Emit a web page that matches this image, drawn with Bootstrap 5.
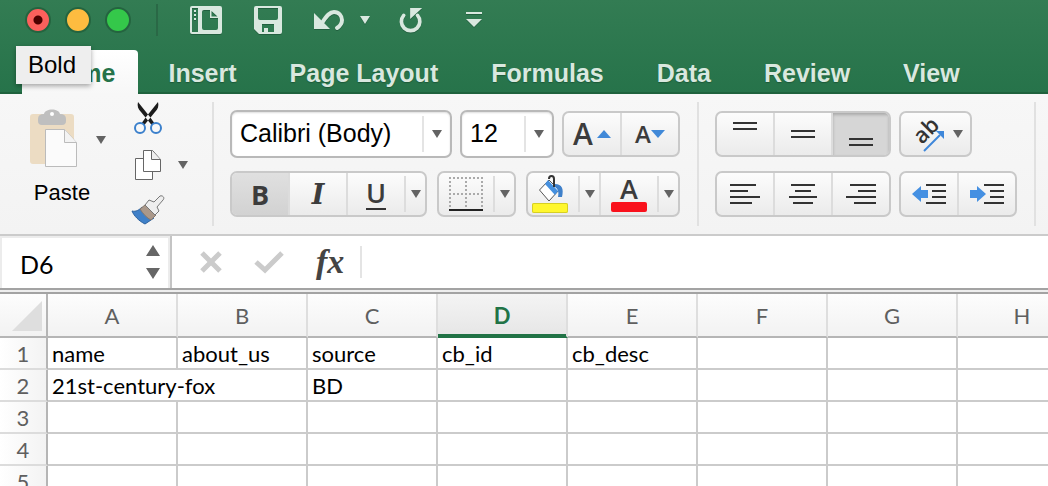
<!DOCTYPE html>
<html lang="en">
<head>
<meta charset="utf-8">
<meta name="viewport" content="width=device-width, initial-scale=1">
<title>Workbook</title>
<link rel="stylesheet" href="https://cdn.jsdelivr.net/npm/bootstrap@5.3.0/dist/css/bootstrap.min.css">
<style>
  :root { --ui: "Liberation Sans", Arial, sans-serif; --cell: Lato, sans-serif; --glyph: "Open Sans", "Noto Sans", sans-serif; }
  body { font-family: var(--ui); background: #fff; }
  svg { display: block; flex: none; overflow: visible; }

  /* title bar and tabs */
  .app-head { background: linear-gradient(#337c53, #26734a); }
  .title-row { height: 40px; padding-left: 25px; }
  .lights { gap: 14px; }
  .light { width: 26px; height: 26px; border-radius: 50%; border: 2px solid #24643f; padding: 0; flex: none; }
  .light-r { background: radial-gradient(circle, #4d0000 4px, #fc605c 5px); }
  .light-y { background: #fdbc40; }
  .light-g { background: #34c84a; }
  .title-rule { width: 2px; height: 32px; background: #2a6846; margin: 0 32px 0 25px; }
  .quick { background: none; border: 0; padding: 0; color: #d9e8df; filter: drop-shadow(0 1px 0 #22603f); }
  .tab-row { margin-top: 10px; padding-left: 22px; gap: 1px; box-shadow: inset 0 -2px #1f623d; }
  .tab-row .nav-link { font-size: 25px; line-height: 46px; height: 44px; font-weight: 700; color: #d9e8df; padding: 0 26px; white-space: nowrap; text-shadow: 0 1px 1px #1d5a39; }
  .tab-row .nav-link.active { color: #26734a; background: linear-gradient(#fff, #f7f7f7); padding: 0 23px 0 24px; margin-right: 3px; border-radius: 4px 4px 0 0; text-shadow: none; }
  .tip { left: 16px; top: 46px; padding: 0 15px 0 12px; line-height: 38px; font-size: 24px; color: #000; background: #eee; box-shadow: 0 2px 5px rgba(0,0,0,.35); z-index: 5; }

  /* ribbon */
  .ribbon { background: linear-gradient(#f7f7f7, #f3f3f3); border-bottom: 2px solid #cbcbcb; height: 142px; padding-left: 22px; }
  .clip-group { width: 190px; }
  .paste-col { width: 80px; }
  .paste-drop { margin-left: -6px; }
  .group-rule { width: 2px; height: 124px; margin-top: 8px; background: #e1e1e1; flex: none; }
  .group { padding: 16px 17px 0 16px; row-gap: 13px; flex: none; }
  .plain { background: none; border: 0; padding: 0; }
  .paste-label { font-size: 22px; line-height: 26px; color: #000; }
  .combo { height: 48px; border: 2px solid #b9b9b9; border-radius: 7px; font-size: 25px; line-height: 28px; color: #000; padding: 0 0 2px 8px; box-shadow: inset 0 1px 2px #ddd;
    background: url("data:image/svg+xml,%3Csvg xmlns='http://www.w3.org/2000/svg' width='28' height='36'%3E%3Cpath d='M0 0h2v36h-2z' fill='%23e4e4e4'/%3E%3Cpath d='M10 14h10l-5 8z' fill='%23636363'/%3E%3C/svg%3E") no-repeat right 0 center #fff; }
  .combo-font { width: 222px; }
  .combo-size { width: 94px; }
  .bar { height: 46px; border: 2px solid #c9c9c9; border-radius: 7px; background: linear-gradient(#fcfcfc, #ebebeb); overflow: hidden; }
  .bar > button { background: none; border: 0; border-left: 2px solid #dcdcdc; padding: 0; width: 58px; display: flex; align-items: center; justify-content: center; font-family: var(--glyph); color: #3c3c3c; line-height: 1; }
  .bar > button:first-child { border-left: 0; width: 56px; }
  .bar > button.drop { width: 21px; color: #636363; border-image: linear-gradient(transparent 10%, #ddd 10% 90%, transparent 90%) 1; }
  .bar > button.on { background: linear-gradient(#e0e0e0, #d2d2d2); }
  .bar > button.pressed { background: #d6d6d6; box-shadow: inset 0 2px 3px #aaa; }
  .bar > button.b-border { width: 54px; }
  .bar > button.b-fill { width: 50px; padding-right: 6px; }
  .bar > button.b-color { width: 58px; }
  .bar > button.b-orient { width: 69px; }
  .g-b { font-size: 27px; font-weight: 700; }
  .g-i { font: italic 700 27px "DejaVu Serif", serif; }
  .g-u { font-size: 27px; font-weight: 600; line-height: 27px; border-bottom: 2px solid #333; width: 20px; height: 31px; }
  .g-a { font-size: 27px; font-weight: 600; line-height: 26px; }
  .g-big { font-size: 30px; font-weight: 600; }
  .g-small { font-size: 24px; font-weight: 600; }
  .swatch { width: 36px; height: 10px; border-radius: 2px; }
  .swatch-y { background: #fff72e; box-shadow: inset 0 0 0 1px #d6cf24; }
  .swatch-r { background: #f9111c; }

  /* formula bar */
  .formula { height: 52px; }
  .name-box { width: 172px; border-right: 2px solid #c4c4c4; box-shadow: inset 2px 2px #ececec, inset -2px 0 #ececec; padding: 0 10px 0 20px; }
  .name-box input { font: 25px/30px var(--cell); color: #000; border: 0; outline: 0; background: none; width: 100px; padding: 4px 0 0; }
  .fx { font: italic 700 34px/40px "Liberation Serif", serif; color: #444; }
  .entry { border: 0; border-left: 2px solid #e4e4e4; height: 32px; outline: 0; }
  .splitter { height: 6px; background: #eee; border: solid #a3a3a3; border-width: 2px 0; }

  /* sheet */
  .sheet { table-layout: fixed; width: 1088px; border-collapse: separate; border-spacing: 0; font: 22px/28px var(--cell); color: #000; }
  .sheet th { font-weight: 400; color: #5f5f5f; text-align: center; padding: 2px 0 0; }
  .sheet thead th { height: 44px; background: linear-gradient(#fdfdfd, #f2f2f2); border-bottom: 2px solid #b5b5b5; border-right: 2px solid #dedede; }
  .sheet thead th:first-child { border-right-color: #b5b5b5; }
  .sheet thead th.current { background: linear-gradient(#f4f4f4, #e6e6e6); color: #217346; font-weight: 700; border-bottom-color: #217346; box-shadow: inset 0 -2px #217346; }
  .sheet tbody th { background: linear-gradient(90deg, #fff, #f3f3f3); border-right: 2px solid #b5b5b5; border-bottom: 2px solid #dcdcdc; }
  .sheet td { height: 32px; padding: 2px 0 0 4px; border-right: 2px solid #cbcbcb; border-bottom: 2px solid #cbcbcb; white-space: nowrap; }
  .c-head { width: 48px; }
  .c-data { width: 130px; }
</style>
<script src="https://cdn.jsdelivr.net/npm/bootstrap@5.3.0/dist/js/bootstrap.bundle.min.js"></script>
</head>
<body class="vh-100 overflow-hidden d-flex flex-column">
<svg width="0" height="0" class="position-absolute" aria-hidden="true">
  <symbol id="caret" viewBox="0 0 10 8"><path d="M0 0h10L5 8z" fill="currentColor"/></symbol>
</svg>

<header class="app-head position-relative flex-shrink-0">
  <div class="title-row d-flex align-items-center">
    <div class="lights d-flex">
      <button class="light light-r" aria-label="Close"></button>
      <button class="light light-y" aria-label="Minimize"></button>
      <button class="light light-g" aria-label="Zoom"></button>
    </div>
    <div class="title-rule"></div>
    <div class="d-flex align-items-center">
      <button class="quick" aria-label="Templates"><svg width="32" height="28" viewBox="0 0 32 28"><path fill="currentColor" fill-rule="evenodd" d="M2 0h28q2 0 2 2v24q0 2-2 2H2q-2 0-2-2V2q0-2 2-2zM2 2v24h6V2zM14 4q-2 0-2 2v16q0 2 2 2h12q2 0 2-2V12h-8V4zM21.500 5v5.500h6z"/><path d="M4 4h2v2H4zM4 8h2v2H4zM4 12h2v2H4z" fill="currentColor"/></svg></button>
      <button class="quick ms-4 ps-2" aria-label="Save"><svg width="28" height="28" viewBox="0 0 28 28"><path fill="currentColor" fill-rule="evenodd" d="M2 0h24q2 0 2 2v24q0 2-2 2H5l-5-5V2q0-2 2-2zM4 2v10q0 2 2 2h16q2 0 2-2V2zM8 18v8h2v-4h4v4h6v-8z"/></svg></button>
      <button class="quick ms-4 ps-2" aria-label="Undo"><svg width="30" height="20" viewBox="0 0 30 20"><path d="M0 3v16h16z" fill="currentColor"/><path d="M8 13C13 5 16 2 20 2c5 0 8 4 8 8 0 3-2 6-5 8" fill="none" stroke="currentColor" stroke-width="4" stroke-linecap="round"/></svg></button>
      <button class="quick ms-3" aria-label="Undo history"><svg width="10" height="8"><use href="#caret"/></svg></button>
      <button class="quick ms-4 ps-1" aria-label="Redo"><svg width="28" height="24" viewBox="0 0 28 26"><path d="M5 8a10 10 0 1 0 15 0" fill="none" stroke="currentColor" stroke-width="4" stroke-linecap="round"/><path d="M12 0h13L12 12z" fill="currentColor"/></svg></button>
      <button class="quick ms-4 ps-3" aria-label="Customize toolbar"><svg width="16" height="16" viewBox="0 0 16 16"><path d="M0 0h16v2H0zM0 7h16l-8 8z" fill="currentColor"/></svg></button>
    </div>
  </div>
  <nav class="tab-row nav flex-nowrap">
    <a class="nav-link active" href="#">Home</a>
    <a class="nav-link" href="#">Insert</a>
    <a class="nav-link" href="#">Page Layout</a>
    <a class="nav-link" href="#">Formulas</a>
    <a class="nav-link" href="#">Data</a>
    <a class="nav-link" href="#">Review</a>
    <a class="nav-link" href="#">View</a>
  </nav>
  <div class="tip position-absolute" role="tooltip">Bold</div>
</header>

<div class="ribbon d-flex flex-shrink-0 overflow-hidden">
  <div class="clip-group d-flex">
    <div class="paste-col pt-3 d-flex flex-column align-items-center">
      <button class="plain d-flex flex-column align-items-center" aria-labelledby="paste">
        <svg class="mb-2" width="64" height="62" viewBox="0 0 64 62"><rect x="0" y="4" width="44" height="50" rx="3" fill="#ecdcc3"/><path d="M8 9q0-5 6-5c1-6 15-6 16 0q6 0 6 5v2q0 4-4 4H12q-4 0-4-4z" fill="#bfbfbf"/><circle cx="22" cy="4" r="2" fill="#fff"/><path d="M15.500 19.500h19l12 13v24h-31z" fill="#fbfbfb" stroke="#bbb"/><path d="M34.500 19.500v13h12" fill="#f3f3f3" stroke="#bbb"/></svg>
        <span id="paste" class="paste-label">Paste</span>
      </button>
    </div>
    <button class="plain paste-drop align-self-start" aria-label="Paste options"><svg width="10" height="92" viewBox="0 0 10 92"><path d="M0 42h10l-5 8z" fill="#636363"/></svg></button>
    <div class="d-flex flex-column align-items-start pt-2 ms-4 ps-1 gap-3">
      <button class="plain" aria-label="Cut"><svg width="28" height="32" viewBox="0 0 28 32"><path d="M4 0c-1 4 0 7 3 10l9 11 3 4 2-3-5-7zM24 0c1 4 0 7-3 10l-9 11-3 4-2-3 5-7z" fill="#1c1c1c"/><g fill="#f8f8f8" stroke="#3b80cc" stroke-width="2"><circle cx="6" cy="26" r="5"/><circle cx="22" cy="26" r="5"/></g></svg></button>
      <div class="d-flex align-items-center">
        <button class="plain" aria-label="Copy"><svg width="28" height="30" viewBox="0 0 28 30"><path d="M1.500 8.500h17v21h-17z" fill="#fff" stroke="#666"/><path d="M9.500.5h9l8 9v12h-17z" fill="#fff" stroke="#666"/><path d="M17.500.5v9h9" fill="#eee" stroke="#666"/></svg></button>
        <button class="plain ms-3" aria-label="Copy options"><svg width="10" height="8" color="#636363"><use href="#caret"/></svg></button>
      </div>
      <button class="plain" aria-label="Format painter"><svg width="30" height="30" viewBox="2 0 30 30"><path d="M0 15c4 1 7-1 10-4l12 11-9 6C7 25 2 20 0 15z" fill="#3f80c8" stroke="#2c62a0"/><path d="M8 13l5-4 11 10-5 5C15 22 11 18 8 13z" fill="#aa988a" stroke="#85786d"/><path d="M13 9l4-5 5 2 6-6c3-1 5 2 3 4l-6 7 2 4-4 4z" fill="#eee" stroke="#777"/></svg></button>
    </div>
  </div>
  <div class="group-rule"></div>

  <div class="group d-flex flex-column">
    <div class="d-flex align-items-center gap-2">
      <select class="combo combo-font form-select" aria-label="Font"><option>Calibri (Body)</option></select>
      <select class="combo combo-size form-select" aria-label="Font size"><option>12</option></select>
      <div class="bar d-flex">
        <button class="gap-1" aria-label="Increase font size"><span class="g-big">A</span><svg width="14" height="8" viewBox="0 0 14 8"><path d="M0 8h14L7 0z" fill="#4189d8"/></svg></button>
        <button aria-label="Decrease font size"><span class="g-small">A</span><svg width="14" height="8" viewBox="0 0 14 8"><path d="M0 0h14L7 8z" fill="#4189d8"/></svg></button>
      </div>
    </div>
    <div class="d-flex justify-content-between">
      <div class="bar d-flex">
        <button class="on" aria-label="Bold"><span class="g-b">B</span></button>
        <button aria-label="Italic"><span class="g-i">I</span></button>
        <button aria-label="Underline"><span class="g-u">U</span></button>
        <button class="drop" aria-label="Underline options"><svg width="10" height="8"><use href="#caret"/></svg></button>
      </div>
      <div class="bar d-flex">
        <button class="b-border" aria-label="Borders"><svg width="34" height="34" viewBox="0 0 34 34"><path d="M0 1h34M0 17h34M1 0v32M17 0v32M33 0v32" fill="none" stroke="#aaa" stroke-width="2" stroke-dasharray="2 2"/><path d="M0 33h34" stroke="#222" stroke-width="2"/></svg></button>
        <button class="drop" aria-label="Border options"><svg width="10" height="8"><use href="#caret"/></svg></button>
      </div>
      <div class="bar d-flex">
        <button class="b-fill flex-column" aria-label="Fill color"><svg width="30" height="28" viewBox="0 0 30 28"><path d="M4.500 15L14 5l10 10-10 11z" fill="#fff" stroke="#555"/><path d="M10 9l3-4 10 11-3 4z" fill="#4590df"/><path d="M14 4c0-4 5-4 5 0v8" fill="none" stroke="#333" stroke-width="2"/><path d="M20 9c7 0 9 5 7 13h-4c1-5 0-8-3-10z" fill="#3f80ca"/></svg><span class="swatch swatch-y"></span></button>
        <button class="drop" aria-label="Fill options"><svg width="10" height="8"><use href="#caret"/></svg></button>
        <button class="b-color flex-column" aria-label="Font color"><span class="g-a">A</span><span class="swatch swatch-r"></span></button>
        <button class="drop" aria-label="Font color options"><svg width="10" height="8"><use href="#caret"/></svg></button>
      </div>
    </div>
  </div>
  <div class="group-rule"></div>

  <div class="group d-flex flex-column">
    <div class="d-flex align-items-center gap-2" style="height:48px">
      <div class="bar d-flex">
        <button aria-label="Top align"><svg width="24" height="36"><path d="M0 7h24M0 13h24" stroke="#333" stroke-width="2"/></svg></button>
        <button aria-label="Middle align"><svg width="24" height="36"><path d="M0 15h24M0 21h24" stroke="#333" stroke-width="2"/></svg></button>
        <button class="pressed" aria-label="Bottom align"><svg width="24" height="36"><path d="M0 23h24M0 29h24" stroke="#333" stroke-width="2"/></svg></button>
      </div>
      <div class="bar d-flex">
        <button class="b-orient gap-2" aria-label="Orientation"><svg width="36" height="38" viewBox="0 0 36 38"><text x="13" y="30" transform="rotate(-45 13 30)" font-family="Open Sans" font-size="22" font-weight="600" fill="#333">ab</text><path d="M15 36l16-16" stroke="#3e87da" stroke-width="2"/><path d="M27 16h8v8z" fill="#3e87da"/></svg><svg width="10" height="8" color="#636363"><use href="#caret"/></svg></button>
      </div>
    </div>
    <div class="d-flex gap-2">
      <div class="bar d-flex">
        <button aria-label="Align left"><svg width="30" height="22"><path d="M0 2h26M0 8h18M0 14h30M0 20h22" stroke="#333" stroke-width="2"/></svg></button>
        <button aria-label="Center"><svg width="30" height="22"><path d="M3 2h24M7 8h16M1 14h28M5 20h20" stroke="#333" stroke-width="2"/></svg></button>
        <button aria-label="Align right"><svg width="30" height="22"><path d="M4 2h26M12 8h18M0 14h30M8 20h22" stroke="#333" stroke-width="2"/></svg></button>
      </div>
      <div class="bar d-flex">
        <button aria-label="Decrease indent"><svg width="34" height="22" viewBox="0 0 34 22"><path d="M14 2h20M20 8h14M20 14h14M14 20h20" stroke="#333" stroke-width="2"/><path d="M0 11l9-8v4h7v8H9v4z" fill="#4590e2"/></svg></button>
        <button aria-label="Increase indent"><svg width="34" height="22" viewBox="0 0 34 22"><path d="M14 2h20M20 8h14M20 14h14M14 20h20" stroke="#333" stroke-width="2"/><path d="M16 11L7 3v4H0v8h7v4z" fill="#4590e2"/></svg></button>
      </div>
    </div>
  </div>
  <div class="group-rule"></div>
</div>

<div class="formula d-flex flex-shrink-0">
  <div class="name-box d-flex align-items-center justify-content-between flex-shrink-0">
    <input type="text" value="D6" aria-label="Name box">
    <svg width="14" height="34" viewBox="0 0 14 34"><path d="M0 11h14L7 0zM0 23h14l-7 11z" fill="#666"/></svg>
  </div>
  <div class="d-flex align-items-center flex-grow-1">
    <button class="plain ms-4 ps-1" aria-label="Cancel"><svg width="22" height="22"><path d="M2 2l18 18M20 2L2 20" stroke="#cbcbcb" stroke-width="5"/></svg></button>
    <button class="plain ms-4 ps-2" aria-label="Enter"><svg width="30" height="22"><path d="M2 11l9 8L28 2" fill="none" stroke="#cbcbcb" stroke-width="5"/></svg></button>
    <button class="plain ms-4 ps-2 fx" aria-label="Insert function">fx</button>
    <input class="entry flex-grow-1 ms-3" type="text" aria-label="Formula">
  </div>
</div>
<div class="splitter flex-shrink-0"></div>

<main class="flex-grow-1 overflow-hidden">
  <table class="sheet">
    <colgroup><col class="c-head"><col class="c-data" span="8"></colgroup>
    <thead><tr>
      <th aria-label="Select all"><svg class="ms-auto me-1" width="30" height="30"><path d="M30 0v30H0z" fill="#dedede"/></svg></th>
      <th>A</th><th>B</th><th>C</th><th class="current">D</th><th>E</th><th>F</th><th>G</th><th>H</th>
    </tr></thead>
    <tbody>
      <tr><th>1</th><td>name</td><td>about_us</td><td>source</td><td>cb_id</td><td>cb_desc</td><td></td><td></td><td></td></tr>
      <tr><th>2</th><td colspan="2">21st-century-fox</td><td>BD</td><td></td><td></td><td></td><td></td><td></td></tr>
      <tr><th>3</th><td></td><td></td><td></td><td></td><td></td><td></td><td></td><td></td></tr>
      <tr><th>4</th><td></td><td></td><td></td><td></td><td></td><td></td><td></td><td></td></tr>
      <tr><th>5</th><td></td><td></td><td></td><td></td><td></td><td></td><td></td><td></td></tr>
    </tbody>
  </table>
</main>
</body>
</html>
